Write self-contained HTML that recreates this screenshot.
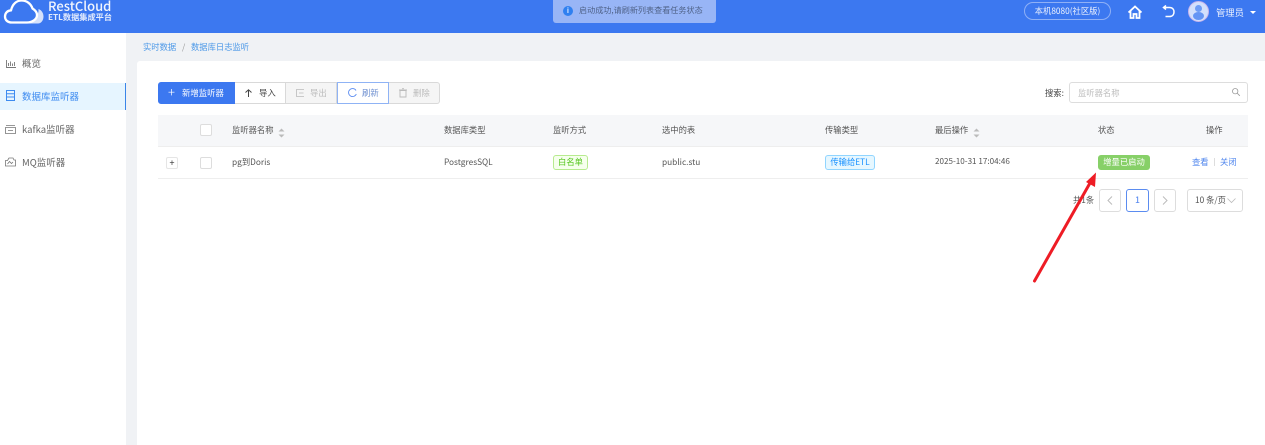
<!DOCTYPE html>
<html lang="zh"><head><meta charset="utf-8"><title>RestCloud</title>
<style>
html,body{margin:0;padding:0;width:1265px;height:445px;overflow:hidden;background:#f0f2f5}
body{position:relative;font-family:"Noto Sans CJK SC","Liberation Sans",sans-serif;font-size:8.3px;color:#555}
#w{position:absolute;left:0;top:0;width:1265px;height:445px;filter:blur(.3px)}
.a{position:absolute;white-space:nowrap}
.t{position:absolute;white-space:nowrap;line-height:12px}
svg{position:absolute;overflow:visible}
.btn{position:absolute;top:82px;height:22px;box-sizing:border-box;border:1px solid #d9d9d9;background:#fff;line-height:19px;font-size:8.4px;white-space:nowrap}
</style></head><body><div id="w">
<div class="a" style="left:0;top:0;width:1265px;height:33px;background:#3c78f0"></div>
<svg style="left:0;top:0" width="46" height="26" viewBox="0 0 46 26"><path d="M27 23.500H38C41 23.500 43.500 20.500 43.500 16.500C43.500 13 41.500 10 38.500 9C39 15 35 20 29 21.500Z" fill="#d5e1fb"/><path d="M12 22.500C7 22.500 5 19.500 5 16.500C5 13 7.500 10.500 11 10.300C12.500 4 16.500 .5 21.500 .5C27 .5 31 4 32.500 8.500C35 10 37 12 37 15C37 19.500 32 22.500 27 22.500Z" fill="none" stroke="#fff" stroke-width="2.300"/></svg>
<div class="t" style="left:48px;top:-1px;color:#fff;font-size:13px;line-height:14px;font-weight:500;opacity:.93">RestCloud</div>
<div class="t" style="left:48px;top:12px;color:#e3ebfd;font-size:8.200px;line-height:11px;font-weight:700">ETL数据集成平台</div>
<div class="a" style="left:553px;top:0;width:163px;height:23px;background:#98b5f6;border-radius:0 0 3px 3px"></div>
<div class="a" style="left:563px;top:6px;width:10px;height:10px;border-radius:50%;background:#2f80f0;color:#dfeafd;font-size:7px;line-height:10px;text-align:center;font-weight:700">i</div>
<div class="t" style="left:579px;top:5px;color:#4f6288;font-size:8.100px">启动成功,请刷新列表查看任务状态</div>
<div class="a" style="left:1024px;top:2px;width:87px;height:18px;box-sizing:border-box;border:1px solid #8fb0f6;border-radius:9px;color:#eaf0fe;font-size:8.300px;line-height:16px;text-align:center">本机8080(社区版)</div>
<svg style="left:1128px;top:5px" width="14" height="14" viewBox="0 0 14 14" fill="none" stroke="#fff" stroke-width="1.800"><path d="M.5 7.500L7 1.500L13.500 7.500M2.500 6V13H5.500V9H8.500V13H11.500V6"/></svg>
<svg style="left:1162px;top:5px" width="13" height="13" viewBox="0 0 13 13" fill="none" stroke="#fff" stroke-width="1.500"><path d="M2 2.500H7.500C10.500 2.500 12 4.500 12 7C12 9.500 10.500 11.500 7.500 11.500H3.500M4 .5L1.500 2.500L4 4.500"/></svg>
<svg style="left:1188px;top:1px" width="21" height="21" viewBox="0 0 21 21"><circle cx="10.500" cy="10.500" r="10" fill="#d3e0fc" stroke="#c8b5ec"/><circle cx="10.500" cy="7.500" r="3.500" fill="#6e9cf5"/><ellipse cx="10.500" cy="15" rx="5.500" ry="4" fill="#6595f4"/></svg>
<div class="t" style="left:1216px;top:6px;color:#eaf0fe;font-size:9.300px">管理员</div>
<div class="a" style="left:1250px;top:11px;width:0;height:0;border:3px solid transparent;border-top:3.500px solid #fff;border-bottom:0"></div>

<div class="a" style="left:0;top:33px;width:126px;height:412px;background:#fff"></div>
<div class="a" style="left:0;top:83px;width:126px;height:27px;box-sizing:border-box;background:#e6f5ff;border-right:1px solid #3a85e8"></div>
<svg style="left:6px;top:59px" width="10" height="9" viewBox="0 0 10 9" fill="none" stroke="#777" stroke-width=".9"><path d="M.5 1V8.500H10M2.500 7V4M4.500 7V2.500M6.500 7V4.500M8.500 7V3"/></svg>
<div class="t" style="left:22px;top:57px;font-size:9.500px;color:#666">概览</div>
<svg style="left:6px;top:90px" width="9" height="11" viewBox="0 0 9 11" fill="none" stroke="#3d8bf0" stroke-width="1"><rect x=".5" y=".5" width="8" height="10"/><path d="M.5 3.700H8.500M.5 7H8.500"/></svg>
<div class="t" style="left:22px;top:90px;font-size:9.500px;color:#3d8bf0">数据库监听器</div>
<svg style="left:5px;top:125px" width="11" height="9" viewBox="0 0 11 9" fill="none" stroke="#777" stroke-width=".8"><path d="M1 .5H10M.5 2.500H10.500V8.500H.5ZM3 5.500H8"/></svg>
<div class="t" style="left:22px;top:123px;font-size:9.500px;color:#666">kafka监听器</div>
<svg style="left:5px;top:157px" width="11" height="10" viewBox="0 0 11 10" fill="none" stroke="#777" stroke-width=".8"><path d="M.5 3.500H2.500L4 1H8L9 3H10.500V9H.5ZM2.500 7L4.500 4.500L6.500 6.500L8 5"/></svg>
<div class="t" style="left:22px;top:156px;font-size:9.500px;color:#666">MQ监听器</div>

<div class="t" style="left:143px;top:41px;color:#4b98e8">实时数据</div>
<div class="t" style="left:182px;top:41px;color:#999">/</div>
<div class="t" style="left:191px;top:41px;color:#4b98e8">数据库日志监听</div>
<div class="a" style="left:137px;top:61px;width:1128px;height:384px;background:#fff;border-radius:3px 0 0 0"></div>

<div class="btn" style="left:158px;width:77px;background:#3c78f0;border-color:#3c78f0;color:#fff;border-radius:3px 0 0 3px"><span class="a" style="left:9px;top:-1px;font-size:13px;font-weight:300">+</span><span class="a" style="left:23px;top:1px">新增监听器</span></div>
<div class="btn" style="left:235px;width:51px;color:#444;border-left:0"><svg style="left:10px;top:6px" width="7" height="8" viewBox="0 0 7 8" fill="none" stroke="#444"><path d="M3.500 8V1M.5 3.500L3.500 .8L6.500 3.500"/></svg><span class="a" style="left:24px;top:1px">导入</span></div>
<div class="btn" style="left:286px;width:51px;background:#f5f5f5;color:#bbb;border-left:0"><svg style="left:10px;top:6px" width="9" height="8" viewBox="0 0 9 8" fill="none" stroke="#bbb" stroke-width=".8"><path d="M8 .5H.5V7.500H8M3 4H7.500"/></svg><span class="a" style="left:24px;top:1px">导出</span></div>
<div class="btn" style="left:337px;width:52px;border-color:#8fb3f5;color:#6d8fd0"><svg style="left:10px;top:5px" width="9" height="9" viewBox="0 0 9 9" fill="none" stroke="#5b8cf0" stroke-width=".9"><path d="M8 2.500A4 4 0 1 0 8.300 6"/></svg><span class="a" style="left:24px;top:1px">刷新</span></div>
<div class="btn" style="left:389px;width:51px;background:#f5f5f5;color:#bbb;border-left:0;border-radius:0 3px 3px 0"><svg style="left:10px;top:5px" width="8" height="10" viewBox="0 0 8 10" fill="none" stroke="#bbb" stroke-width=".9"><path d="M1 2.500H7V9H1ZM0 2H8M3 .7H5"/></svg><span class="a" style="left:24px;top:1px">删除</span></div>

<div class="t" style="left:1045px;top:87px;color:#444">搜索:</div>
<div class="a" style="left:1069px;top:82px;width:179px;height:21px;box-sizing:border-box;border:1px solid #ddd;border-radius:3px;background:#fff"></div>
<div class="t" style="left:1078px;top:87px;color:#bdbdbd">监听器名称</div>
<svg style="left:1232px;top:88px" width="8" height="8" viewBox="0 0 8 8" fill="none" stroke="#999" stroke-width=".8"><circle cx="3.200" cy="3.200" r="2.700"/><path d="M5.200 5.200L7.800 7.800"/></svg>

<div class="a" style="left:158px;top:115px;width:1090px;height:31px;background:#f6f7f9"></div>
<div class="a" style="left:158px;top:146px;width:1090px;height:1px;background:#eee"></div>
<div class="a" style="left:158px;top:178px;width:1090px;height:1px;background:#eee"></div>
<div class="a" style="left:200px;top:124px;width:12px;height:12px;box-sizing:border-box;border:1px solid #ddd;border-radius:2px;background:#fff"></div>
<div class="a" style="left:200px;top:157px;width:12px;height:12px;box-sizing:border-box;border:1px solid #ddd;border-radius:2px;background:#fff"></div>
<div class="a" style="left:166px;top:157px;width:12px;height:12px;box-sizing:border-box;border:1px solid #e5e5e5;border-radius:2px;background:#fff;color:#333;font-size:9px;line-height:10px;text-align:center">+</div>
<div class="t" style="left:232px;top:124px">监听器名称</div>
<svg style="left:278px;top:128px" width="7" height="10" viewBox="0 0 7 10" fill="#bbb"><path d="M3.500 .5L6.500 3.500H.5ZM3.500 9.500L.5 6.500H6.500Z"/></svg>
<div class="t" style="left:444px;top:124px">数据库类型</div>
<div class="t" style="left:553px;top:124px">监听方式</div>
<div class="t" style="left:662px;top:124px">选中的表</div>
<div class="t" style="left:825px;top:124px">传输类型</div>
<div class="t" style="left:935px;top:124px">最后操作</div>
<svg style="left:973px;top:128px" width="7" height="10" viewBox="0 0 7 10" fill="#bbb"><path d="M3.500 .5L6.500 3.500H.5ZM3.500 9.500L.5 6.500H6.500Z"/></svg>
<div class="t" style="left:1098px;top:124px">状态</div>
<div class="t" style="left:1206px;top:124px">操作</div>

<div class="t" style="left:232px;top:156px">pg到Doris</div>
<div class="t" style="left:444px;top:156px">PostgresSQL</div>
<div class="a" style="left:553px;top:155px;width:35px;height:15px;box-sizing:border-box;border:1px solid #b7eb8f;border-radius:3px;background:#f6ffed;color:#52c41a;text-align:center;line-height:13px">白名单</div>
<div class="t" style="left:662px;top:156px">public.stu</div>
<div class="a" style="left:825px;top:155px;width:50px;height:15px;box-sizing:border-box;border:1px solid #91d5ff;border-radius:3px;background:#e6f7ff;color:#1890ff;text-align:center;line-height:13px">传输给ETL</div>
<div class="t" style="left:935px;top:156px;font-size:8.100px">2025-10-31 17:04:46</div>
<div class="a" style="left:1098px;top:155px;width:52px;height:15px;background:#87d068;border-radius:3px;color:#fff;text-align:center;line-height:15px">增量已启动</div>
<div class="t" style="left:1192px;top:156px;color:#4f86ee">查看</div>
<div class="a" style="left:1214px;top:158px;width:1px;height:8px;background:#ddd"></div>
<div class="t" style="left:1220px;top:156px;color:#4f86ee">关闭</div>

<div class="t" style="left:1073px;top:194px">共1条</div>
<div class="a" style="left:1099px;top:189px;width:22px;height:23px;box-sizing:border-box;border:1px solid #ddd;border-radius:3px;background:#fff"></div>
<svg style="left:1107px;top:196px" width="6" height="9" viewBox="0 0 6 9" fill="none" stroke="#bbb"><path d="M5 .5L1 4.500L5 8.500"/></svg>
<div class="a" style="left:1126px;top:189px;width:23px;height:23px;box-sizing:border-box;border:1px solid #5b8cf0;border-radius:3px;background:#fff;color:#5b8cf0;text-align:center;line-height:21px;font-weight:500">1</div>
<div class="a" style="left:1154px;top:189px;width:22px;height:23px;box-sizing:border-box;border:1px solid #ddd;border-radius:3px;background:#fff"></div>
<svg style="left:1162px;top:196px" width="6" height="9" viewBox="0 0 6 9" fill="none" stroke="#bbb"><path d="M1 .5L5 4.500L1 8.500"/></svg>
<div class="a" style="left:1187px;top:189px;width:56px;height:23px;box-sizing:border-box;border:1px solid #ddd;border-radius:3px;background:#fff;line-height:21px;padding-left:7px;color:#555">10 条/页</div>
<svg style="left:1227px;top:198px" width="9" height="5" viewBox="0 0 9 5" fill="none" stroke="#bbb" stroke-width=".8"><path d="M.5 .5L4.500 4.500L8.500 .5"/></svg>

<svg style="left:0;top:0" width="1265" height="445"><path d="M1034.500 281L1090 183" stroke="#ee1c25" stroke-width="3" stroke-linecap="round" fill="none"/><path d="M1096 172.500L1095 187L1086 182Z" fill="#ee1c25"/></svg>
</div></body></html>
